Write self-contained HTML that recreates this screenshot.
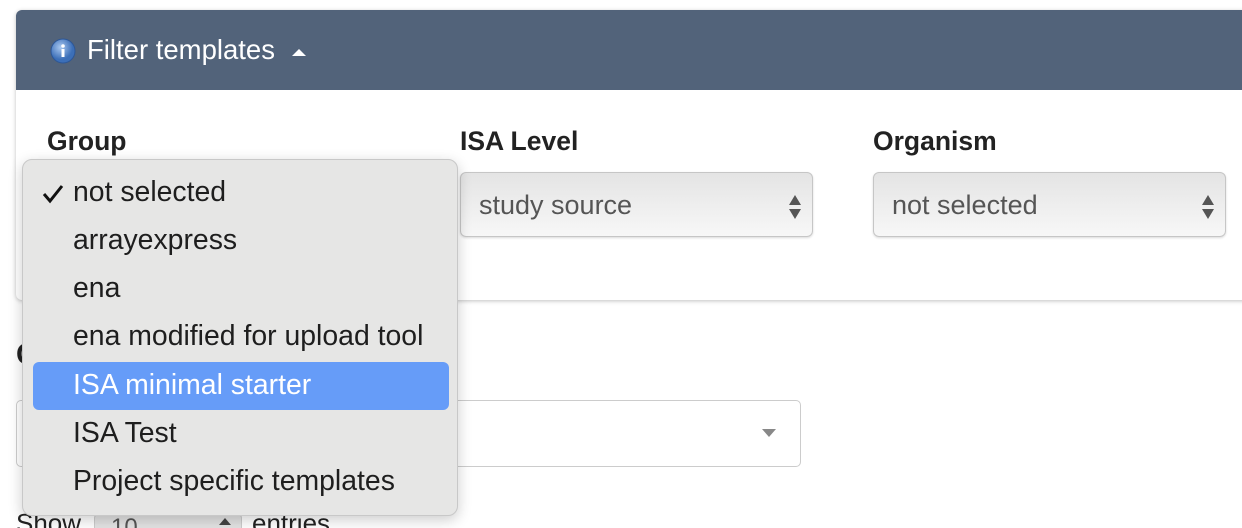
<!DOCTYPE html>
<html style="overflow:hidden;height:528px"><head><style>
body{margin:0;width:1242px;height:528px;overflow:hidden;background:#fff;font-family:"Liberation Sans",Arial,sans-serif;position:relative}
.a{position:absolute}
.panel{left:16px;top:10px;width:1240px;height:290px;border-radius:6px;box-shadow:0 1px 4px rgba(0,0,0,.25);background:#fff;overflow:hidden}
.hdr{left:0;top:0;right:0;height:80px;background:#52637a;color:#fff;font-size:27.5px}
.lbl{font-size:26.5px;font-weight:bold;color:#222}
.sel{height:65px;border:1px solid #c6c6c6;border-radius:6px;background:linear-gradient(#e4e4e4,#f7f7f7);box-shadow:0 1px 2px rgba(0,0,0,.15);font-size:27px;color:#555;line-height:65px;padding-left:18px;box-sizing:border-box}
.menu{left:22px;top:159px;width:436px;height:357px;background:#e6e6e5;border:1px solid #c8c8c8;border-radius:10px;box-shadow:0 4px 14px rgba(0,0,0,.2);box-sizing:border-box}
.it{position:absolute;left:50px;font-size:28.4px;color:#1e1e1e;height:48px;line-height:48px;white-space:nowrap}
</style></head><body>
<div class="a panel">
 <div class="a hdr">
  <svg class="a" style="left:34px;top:28px" width="26" height="26" viewBox="0 0 26 26"><defs><radialGradient id="g" cx="40%" cy="35%"><stop offset="0" stop-color="#a9c8f0"/><stop offset="1" stop-color="#3c6fb8"/></radialGradient></defs><circle cx="13" cy="13" r="12" fill="url(#g)" stroke="#2d5797"/><circle cx="13" cy="8" r="1.8" fill="#fff"/><rect x="11.5" y="11" width="3" height="8" fill="#fff"/></svg>
  <div class="a" style="left:71px;top:24px">Filter templates</div>
  <svg class="a" style="left:275px;top:37px" width="16" height="10"><path d="M1 9 L8 2 L15 9Z" fill="#fff"/></svg>
 </div>
 <div class="a lbl" style="left:31px;top:116px">Group</div>
 <div class="a lbl" style="left:444px;top:116px">ISA Level</div>
 <div class="a lbl" style="left:857px;top:116px">Organism</div>
 <div class="a sel" style="left:444px;top:162px;width:353px">study source
  <svg style="position:absolute;right:10px;top:21px" width="14" height="26"><path d="M1 11L7 1L13 11Z M1 15L7 25L13 15Z" fill="#555"/></svg></div>
 <div class="a sel" style="left:857px;top:162px;width:353px">not selected
  <svg style="position:absolute;right:10px;top:21px" width="14" height="26"><path d="M1 11L7 1L13 11Z M1 15L7 25L13 15Z" fill="#555"/></svg></div>
</div>
<div class="a" style="left:16px;top:338px;font-size:30px;font-weight:bold;color:#222">C</div>
<div class="a" style="left:16px;top:400px;width:785px;height:67px;border:1px solid #ccc;border-radius:5px;box-sizing:border-box"></div>
<svg class="a" style="left:761px;top:428px" width="16" height="10"><path d="M1 1L8 9L15 1Z" fill="#888"/></svg>
<div class="a" style="left:16px;top:508px;font-size:26px;color:#222;line-height:30px;height:20px;overflow:hidden">Show</div>
<div class="a" style="left:94px;top:514px;width:148px;height:14px;background:#e3e3e3;border:1px solid #ccc;border-bottom:none;border-radius:4px 4px 0 0;font-size:24px;color:#555;padding-left:16px;box-sizing:border-box;line-height:26px;overflow:hidden">10</div>
<svg class="a" style="left:218px;top:517px" width="14" height="9"><path d="M1 8L7 1L13 8Z" fill="#444"/></svg>
<div class="a" style="left:252px;top:508px;font-size:26px;color:#222;line-height:30px;height:20px;overflow:hidden">entries</div>
<div class="a menu">
 <div class="a" style="left:10px;top:202px;width:416px;height:48px;background:#669cf8;border-radius:6px"></div>
 <svg class="a" style="left:19px;top:24px" width="22" height="20"><path d="M2 10L8 17L20 2" fill="none" stroke="#111" stroke-width="3"/></svg>
 <div class="it" style="top:8px">not selected</div>
 <div class="it" style="top:56px">arrayexpress</div>
 <div class="it" style="top:104px">ena</div>
 <div class="it" style="top:152px">ena modified for upload tool</div>
 <div class="it" style="top:201px;color:#fff">ISA minimal starter</div>
 <div class="it" style="top:249px">ISA Test</div>
 <div class="it" style="top:297px">Project specific templates</div>
</div>
</body></html>
